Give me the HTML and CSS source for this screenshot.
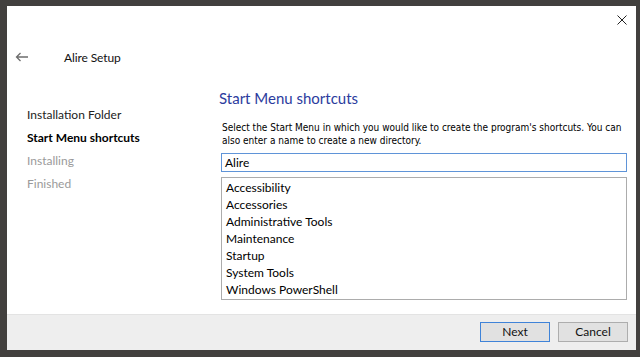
FILE: index.html
```html
<!DOCTYPE html>
<html>
<head>
<meta charset="utf-8">
<link rel="stylesheet" href="styles.css">
</head>
<body>
<div class="window">
  <div class="titlebar">
    <button class="close" aria-label="Close">
      <svg width="10" height="10" viewBox="0 0 10 10"><path d="M0.5 0.5L9.5 9.5M9.5 0.5L0.5 9.5" stroke="#222" stroke-width="1" fill="none"/></svg>
    </button>
  </div>
  <div class="header">
    <svg class="back" width="14" height="10" viewBox="0 0 14 10"><path d="M13 5H1.5M5.5 1L1.5 5L5.5 9" stroke="#6d6d6d" stroke-width="1.3" fill="none"/></svg>
    <span class="apptitle">Alire Setup</span>
  </div>
  <div class="main">
    <ul class="steps">
      <li class="step">Installation Folder</li>
      <li class="step current">Start Menu shortcuts</li>
      <li class="step future">Installing</li>
      <li class="step future">Finished</li>
    </ul>
    <div class="content">
      <h1 class="heading">Start Menu shortcuts</h1>
      <p class="desc">Select the Start Menu in which you would like to create the program's shortcuts. You can also enter a name to create a new directory.</p>
      <div class="input">Alire</div>
      <ul class="list">
        <li>Accessibility</li>
        <li>Accessories</li>
        <li>Administrative Tools</li>
        <li>Maintenance</li>
        <li>Startup</li>
        <li>System Tools</li>
        <li>Windows PowerShell</li>
      </ul>
    </div>
  </div>
  <div class="footer">
    <button class="btn primary">Next</button>
    <button class="btn">Cancel</button>
  </div>
</div>
</body>
</html>
```
FILE: styles.css
```css
* { box-sizing: border-box; }
html, body { margin: 0; padding: 0; }
body {
  width: 640px;
  height: 357px;
  background: #42403e;
  padding: 6px 4px 7px 7px;
  font-family: Lato, "Liberation Sans", sans-serif;
  font-size: 12px;
  color: #000;
  overflow: hidden;
}
.window {
  width: 629px;
  height: 344px;
  background: #fff;
  display: flex;
  flex-direction: column;
}
.titlebar {
  height: 28px;
  display: flex;
  justify-content: flex-end;
  align-items: flex-start;
  padding: 4px 9px 0 0;
}
.close {
  border: 0;
  background: transparent;
  padding: 0;
  width: 10px;
  height: 10px;
  margin-top: 5px;
  display: flex;
}
.header {
  height: 38px;
  display: flex;
  align-items: center;
  padding-left: 8px;
  margin-top: 4px;
}
.back { margin-right: 35px; }
.apptitle { font-size: 12px; color: #111; letter-spacing: -0.1px; }
.main {
  flex: 1;
  display: flex;
}
.steps {
  list-style: none;
  margin: 0;
  padding: 27px 0 0 20px;
  width: 212px;
}
.step {
  height: 23px;
  line-height: 23px;
  color: #222;
  white-space: nowrap;
}
.step.current { font-weight: bold; color: #000; }
.step.future { color: #9a9a9a; }
.content {
  flex: 1;
  padding: 11px 9px 0 0;
}
.heading {
  margin: 0 0 12px 0;
  font-weight: normal;
  font-size: 15px;
  line-height: 22px;
  color: #2b3c9e;
}
.desc {
  margin: 0 0 6px 3px;
  font-family: "DejaVu Sans Condensed", "DejaVu Sans", sans-serif;
  font-stretch: condensed;
  font-size: 10px;
  line-height: 13px;
  color: #000;
}
.input {
  height: 19px;
  border: 1px solid #5f94d8;
  padding: 0 3px;
  line-height: 17px;
  font-size: 12px;
  margin-left: 2px;
}
.list {
  list-style: none;
  margin: 5px 0 0 2px;
  height: 123px;
  border: 1px solid #acacac;
  padding: 1px 4px;
}
.list li {
  height: 17px;
  line-height: 17px;
}
.footer {
  height: 36px;
  background: #eeeeee;
  border-top: 1px solid #e3e3e3;
  display: flex;
  justify-content: flex-end;
  align-items: flex-start;
  gap: 8px;
  padding: 7px 8px 0 0;
}
.btn {
  width: 70px;
  height: 20px;
  background: #e1e1e1;
  border: 1px solid #adadad;
  font-family: Lato, "Liberation Sans", sans-serif;
  font-size: 12px;
  color: #111;
  padding: 0;
  line-height: 18px;
}
.btn.primary { border-color: #3f83d8; }
```
